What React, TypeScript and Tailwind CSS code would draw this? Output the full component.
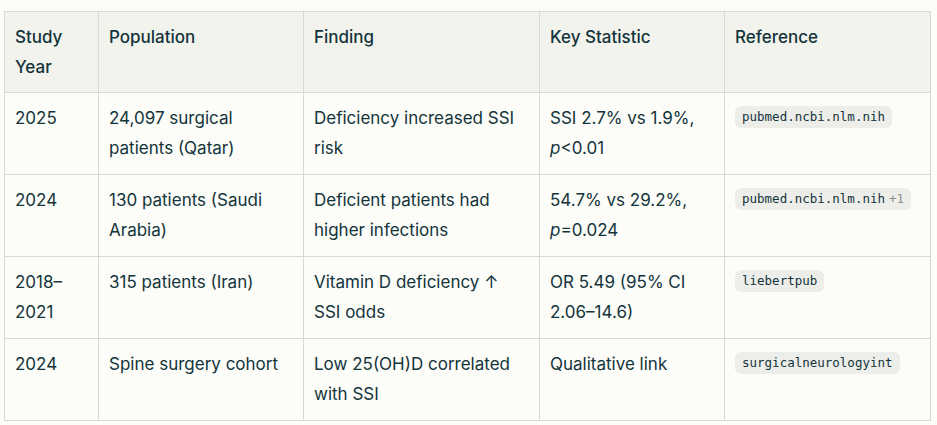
import React from "react";

const rows: { year: string; pop: string; finding: React.ReactNode; stat: React.ReactNode; ref: string; extra?: string }[] = [
  {
    year: "2025",
    pop: "24,097 surgical patients (Qatar)",
    finding: "Deficiency increased SSI risk",
    stat: (
      <>
        SSI 2.7% vs 1.9%, <i>p</i>&lt;0.01
      </>
    ),
    ref: "pubmed.ncbi.nlm.nih",
  },
  {
    year: "2024",
    pop: "130 patients (Saudi Arabia)",
    finding: "Deficient patients had higher infections",
    stat: (
      <>
        54.7% vs 29.2%, <i>p</i>=0.024
      </>
    ),
    ref: "pubmed.ncbi.nlm.nih",
    extra: "+1",
  },
  {
    year: "2018–2021",
    pop: "315 patients (Iran)",
    finding: "Vitamin D deficiency ↑ SSI odds",
    stat: "OR 5.49 (95% CI 2.06–14.6)",
    ref: "liebertpub",
  },
  {
    year: "2024",
    pop: "Spine surgery cohort",
    finding: "Low 25(OH)D correlated with SSI",
    stat: "Qualitative link",
    ref: "surgicalneurologyint",
  },
];

export default function App() {
  return (
    <div className="min-h-[425px] w-[937px] bg-[#fcfcf9] pl-[4px] pt-[11px] font-['Inter',sans-serif] text-[#13343b]">
      <table className="w-[926px] table-fixed border-collapse text-[17px] leading-[30px]">
        <colgroup>
          <col className="w-[94px]" />
          <col className="w-[205px]" />
          <col className="w-[236px]" />
          <col className="w-[185px]" />
          <col className="w-[206px]" />
        </colgroup>
        <thead>
          <tr className="bg-[#f3f3ee]">
            {["Study Year", "Population", "Finding", "Key Statistic", "Reference"].map((h) => (
              <th
                key={h}
                className="h-[81px] border border-[#d9d9d4] px-[10px] py-[10px] text-left align-top font-medium"
              >
                {h}
              </th>
            ))}
          </tr>
        </thead>
        <tbody>
          {rows.map((r, i) => (
            <tr key={i} className="h-[82px]">
              <td className="border border-[#d9d9d4] px-[10px] pt-[10px] align-top">{r.year}</td>
              <td className="border border-[#d9d9d4] px-[10px] pt-[10px] align-top">{r.pop}</td>
              <td className="border border-[#d9d9d4] px-[10px] pt-[10px] align-top">{r.finding}</td>
              <td className="border border-[#d9d9d4] px-[10px] pt-[10px] align-top">{r.stat}</td>
              <td className="border border-[#d9d9d4] px-[10px] pt-[13px] align-top">
                <div className="flex">
                  <span className="flex h-[22px] items-center gap-[4px] rounded-[6px] bg-[#ededea] px-[7px] font-['DejaVu_Sans_Mono',monospace] text-[12.5px] leading-none text-[#13343b]">
                    {r.ref}
                    {r.extra && <span className="text-[#8a8f8f]">{r.extra}</span>}
                  </span>
                </div>
              </td>
            </tr>
          ))}
        </tbody>
      </table>
    </div>
  );
}
